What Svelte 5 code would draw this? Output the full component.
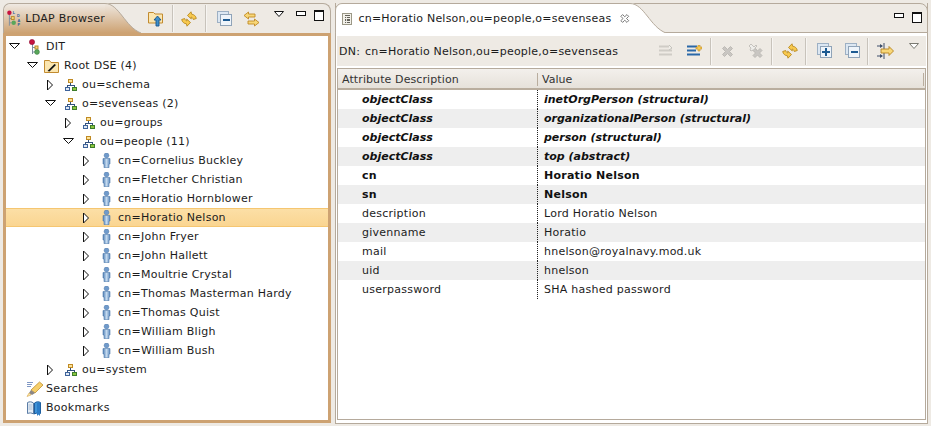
<script lang="ts">
const tree = [
	{ level: 0, open: true, icon: 'dit', label: 'DIT' },
	{ level: 1, open: true, icon: 'root', label: 'Root DSE (4)' },
	{ level: 2, open: false, icon: 'org', label: 'ou=schema' },
	{ level: 2, open: true, icon: 'org', label: 'o=sevenseas (2)' },
	{ level: 3, open: false, icon: 'org', label: 'ou=groups' },
	{ level: 3, open: true, icon: 'org', label: 'ou=people (11)' },
	{ level: 4, open: false, icon: 'person', label: 'cn=Cornelius Buckley' },
	{ level: 4, open: false, icon: 'person', label: 'cn=Fletcher Christian' },
	{ level: 4, open: false, icon: 'person', label: 'cn=Horatio Hornblower' },
	{ level: 4, open: false, icon: 'person', label: 'cn=Horatio Nelson', selected: true },
	{ level: 4, open: false, icon: 'person', label: 'cn=John Fryer' },
	{ level: 4, open: false, icon: 'person', label: 'cn=John Hallett' },
	{ level: 4, open: false, icon: 'person', label: 'cn=Moultrie Crystal' },
	{ level: 4, open: false, icon: 'person', label: 'cn=Thomas Masterman Hardy' },
	{ level: 4, open: false, icon: 'person', label: 'cn=Thomas Quist' },
	{ level: 4, open: false, icon: 'person', label: 'cn=William Bligh' },
	{ level: 4, open: false, icon: 'person', label: 'cn=William Bush' },
	{ level: 2, open: false, icon: 'org', label: 'ou=system' },
	{ level: 0, open: null, icon: 'search', label: 'Searches' },
	{ level: 0, open: null, icon: 'book', label: 'Bookmarks' }
];

const attrs = [
	{ name: 'objectClass', value: 'inetOrgPerson (structural)', kind: 'oc' },
	{ name: 'objectClass', value: 'organizationalPerson (structural)', kind: 'oc' },
	{ name: 'objectClass', value: 'person (structural)', kind: 'oc' },
	{ name: 'objectClass', value: 'top (abstract)', kind: 'oc' },
	{ name: 'cn', value: 'Horatio Nelson', kind: 'must' },
	{ name: 'sn', value: 'Nelson', kind: 'must' },
	{ name: 'description', value: 'Lord Horatio Nelson', kind: '' },
	{ name: 'givenname', value: 'Horatio', kind: '' },
	{ name: 'mail', value: 'hnelson@royalnavy.mod.uk', kind: '' },
	{ name: 'uid', value: 'hnelson', kind: '' },
	{ name: 'userpassword', value: 'SHA hashed password', kind: '' }
];
</script>

{#snippet ditIcon()}
	<svg width="16" height="16" viewBox="0 0 16 16">
		<path d="M5.500 3v12M5.500 8.500H8M5.500 13H8" stroke="#7d8ea0" fill="none" />
		<circle cx="5" cy="3" r="2.600" fill="#c8123f" stroke="#8d1037" stroke-width=".6" />
		<rect x="8" y="7" width="3" height="3" fill="#f4d67c" stroke="#b98a2a" />
		<circle cx="10" cy="13" r="2.400" fill="#5aa65a" stroke="#37803f" stroke-width=".6" />
	</svg>
{/snippet}

{#snippet orgIcon()}
	<svg class="org" width="12" height="12" viewBox="0 0 12 12" shape-rendering="crispEdges">
		<rect x="3.500" y=".5" width="4" height="3" fill="#fbe39a" stroke="#c08a24" />
		<path d="M5.500 4v2M2.500 8V6.500h6.500V8" stroke="#33527e" fill="none" />
		<rect x=".5" y="8.500" width="4" height="3" fill="#dfe8f4" stroke="#3e639a" />
		<rect x="7.500" y="8.500" width="4" height="3" fill="#8cc63f" stroke="#3d7d2c" />
	</svg>
{/snippet}

{#snippet personIcon()}
	<svg class="person" width="9" height="15" viewBox="0 0 9 15">
		<defs>
			<linearGradient id="pb" x1="0" x2="1" y1="0" y2="0">
				<stop offset="0" stop-color="#4f7fb5" />
				<stop offset=".5" stop-color="#c4daef" />
				<stop offset="1" stop-color="#5d8abd" />
			</linearGradient>
		</defs>
		<ellipse cx="4.500" cy="2.500" rx="2.400" ry="2.400" fill="#6f9acb" stroke="#4b76a8" stroke-width=".5" />
		<path d="M1 5.500h7v5.500H7v3.700H2V11H1z" fill="url(#pb)" stroke="#4f7aab" stroke-width=".6" />
	</svg>
{/snippet}

{#snippet rootIcon()}
	<svg class="root" width="15" height="14" viewBox="0 0 15 14">
		<path d="M.5 1.500h5l1.500 2h7.500v10H.5z" fill="#fbe6b0" stroke="#c28b2f" />
		<path d="M3.500 12l7-7 1.500 1-6.500 6.500z" fill="#111" />
	</svg>
{/snippet}

{#snippet searchIcon()}
	<svg class="root" width="18" height="16" viewBox="0 0 18 16">
		<path d="M1 1.500h6M1 3.500h5M1 5.500h4" stroke="#7f97c4" />
		<path d="M13.500 1 17 4l-8 8-4-3z" fill="#f6cf6b" stroke="#c08f2c" stroke-width=".8" />
		<path d="M5 9l4 3-3 2-3-2z" fill="#8b8684" />
		<path d="M3 12l2 2-4 1.500z" fill="#f6e4a8" stroke="#d49a35" stroke-width=".5" />
	</svg>
{/snippet}

{#snippet bookIcon()}
	<svg width="16" height="16" viewBox="0 0 16 16">
		<path d="M.5 2.500c2-1 4-1 6 .5v11c-2-1.300-4-1.300-6-.5z" fill="#e4edf6" stroke="#5b7da6" />
		<path d="M1.500 5h4M1.500 7h4M1.500 9h4" stroke="#a9bcd3" />
		<path d="M7.500 3c2-1.500 4-1.500 6-.5v11c-2-.8-4-.8-6 .5z" fill="#3f93d8" stroke="#1f5f9f" />
		<path d="M10 3h3v13l-1.500-1.500L10 16z" fill="#2a7cc8" />
	</svg>
{/snippet}

{#snippet twisty(open)}
	<svg class="twisty" width="12" height="12" viewBox="0 0 12 12">
		{#if open}
			<path d="M.5 2.500h10L5.500 7.500z" fill="#fff" stroke="#111" />
		{:else}
			<path d="M2.500 1v10L7.500 6z" fill="#fff" stroke="#111" />
		{/if}
	</svg>
{/snippet}

{#snippet refreshIcon()}
	<svg width="16" height="16" viewBox="0 0 16 16">
		<g fill="#f8c94e" stroke="#b98a20" stroke-width=".9">
			<path d="M6.500 4.500 10 .8l.6 2.400c2.400.2 4.200 1.800 4.700 4.300l-3 1c-.4-1.500-1.100-2.200-2.200-2.400l.2 1.800z" />
			<path d="M6.500 4.500 10 .8l.6 2.400c2.400.2 4.200 1.800 4.700 4.300l-3 1c-.4-1.500-1.100-2.200-2.200-2.400l.2 1.800z" transform="rotate(180 8 8)" />
		</g>
	</svg>
{/snippet}

{#snippet collapseIcon()}
	<svg width="16" height="16" viewBox="0 0 16 16" shape-rendering="crispEdges">
		<rect x=".5" y=".5" width="11" height="11" fill="#dce7f2" stroke="#9db0c4" />
		<rect x="3.500" y="3.500" width="11" height="11" fill="#eef4fa" stroke="#8fa3b8" />
		<path d="M5.500 9h7" stroke="#1c5a92" stroke-width="2" />
	</svg>
{/snippet}

{#snippet expandIcon()}
	<svg width="16" height="16" viewBox="0 0 16 16" shape-rendering="crispEdges">
		<rect x=".5" y=".5" width="11" height="11" fill="#dce7f2" stroke="#9db0c4" />
		<rect x="3.500" y="3.500" width="11" height="11" fill="#eef4fa" stroke="#8fa3b8" />
		<path d="M5 9h8M9 5v8" stroke="#1c5a92" stroke-width="1.500" />
	</svg>
{/snippet}

{#snippet linkIcon()}
	<svg width="17" height="16" viewBox="0 0 17 16">
		<path d="M1 4.500 5.500 1v2H12v3H5.500v2z" fill="#f8d778" stroke="#c08a24" stroke-width=".9" />
		<path d="M16 11.500 11.500 8v2H5v3h6.500v2z" fill="#f8d778" stroke="#c08a24" stroke-width=".9" />
	</svg>
{/snippet}

{#snippet upIcon()}
	<svg width="16" height="16" viewBox="0 0 16 16">
		<path d="M.5 1.500h5l1.500 1.500h7.500v9H.5z" fill="#fbe6b0" stroke="#c28b2f" />
		<path d="M9.500 5l3.500 4h-2v6H8V9H6z" fill="#3f8fc8" stroke="#17558f" stroke-width=".9" />
	</svg>
{/snippet}

{#snippet menuArrow()}
	<svg width="11" height="7" viewBox="0 0 11 7"><path d="M.5.500h9L5 5.500z" fill="#fff" stroke="#111" /></svg>
{/snippet}

{#snippet menuArrowGrey()}
	<svg width="11" height="7" viewBox="0 0 11 7"><path d="M.5.500h9L5 5.500z" fill="#fff" stroke="#7a7a72" /></svg>
{/snippet}

{#snippet winButtons()}
	<div class="win-buttons">
		<span class="btn-min"></span>
		<span class="btn-max"></span>
	</div>
{/snippet}

<div class="app">
	<section class="browser">
		<header class="tabbar">
			<div class="tab tan">
				<svg width="16" height="19" viewBox="0 0 16 19" class="tab-icon">
					<path d="M2.500 5v12M2.500 9.500H5M2.500 14H5" stroke="#7d8ea0" fill="none" />
					<circle cx="2.500" cy="3.500" r="2.300" fill="#c8123f" />
					<rect x="4.500" y="7.500" width="3" height="3" fill="#f4d67c" stroke="#b98a2a" />
					<circle cx="7" cy="14" r="2.300" fill="#5aa65a" />
					<text x="6" y="4.500" class="mini">L</text>
					<text x="10.500" y="8" class="mini">D</text>
					<text x="11" y="12.700" class="mini">A</text>
					<text x="11" y="17.400" class="mini">P</text>
				</svg>
				<span class="tab-title">LDAP Browser</span>
				<svg class="tab-curve" width="36" height="30" viewBox="0 0 36 30" preserveAspectRatio="none">
					<path d="M0 0C14 0 20 24 36 30H0z" fill="url(#tanfade)" />
					<path d="M0 .5C14 .5 20 24 36 30" fill="none" stroke="#b5aa9c" />
					<defs>
						<linearGradient id="tanfade" x1="0" x2="0" y1="0" y2="1">
							<stop offset="0" stop-color="#efe9e2" />
							<stop offset="1" stop-color="#cda272" />
						</linearGradient>
					</defs>
				</svg>
			</div>
			<div class="tools">
				<span class="tool t1">{@render upIcon()}</span>
				<i class="sep"></i>
				<span class="tool t2">{@render refreshIcon()}</span>
				<i class="sep"></i>
				<span class="tool t3">{@render collapseIcon()}</span>
				<span class="tool t4">{@render linkIcon()}</span>
				<span class="tool-menu">{@render menuArrow()}</span>
				{@render winButtons()}
			</div>
		</header>
		<div class="tree">
			{#each tree as node}
				<div class="node" class:selected={node.selected} style="padding-left: {3 + node.level * 18}px">
					<span class="twisty-box">
						{#if node.open !== null}{@render twisty(node.open)}{/if}
					</span>
					<span class="node-icon">
						{#if node.icon === 'dit'}{@render ditIcon()}
						{:else if node.icon === 'root'}{@render rootIcon()}
						{:else if node.icon === 'org'}{@render orgIcon()}
						{:else if node.icon === 'person'}{@render personIcon()}
						{:else if node.icon === 'search'}{@render searchIcon()}
						{:else}{@render bookIcon()}{/if}
					</span>
					<span>{node.label}</span>
				</div>
			{/each}
		</div>
	</section>

	<section class="editor">
		<header class="tabbar editor-bar">
			<div class="tab white">
				<svg width="12" height="14" viewBox="0 0 12 14" class="doc-icon" shape-rendering="crispEdges">
					<rect x=".5" y=".5" width="11" height="13" fill="#f3f1ea" stroke="#8d8a78" />
					<path d="M3 3h6M3 5h6M3 7h6M3 9h6M3 11h6" stroke="#4c4c44" />
					<path d="M5.500 3v9" stroke="#f3f1ea" />
				</svg>
				<span class="tab-title">cn=Horatio Nelson,ou=people,o=sevenseas</span>
				<svg class="close" width="11" height="11" viewBox="0 0 11 11">
					<path d="M1 3 3 1l2.500 2.500L8 1l2 2-2.500 2.500L10 8 8 10 5.500 7.500 3 10 1 8l2.500-2.500z" fill="#fff" stroke="#555" stroke-width=".9" />
				</svg>
				<svg class="tab-curve" width="36" height="30" viewBox="0 0 36 30" preserveAspectRatio="none">
					<path d="M0 0C14 0 20 24 36 30H0z" fill="#fff" />
					<path d="M0 .5C14 .5 20 24 36 30" fill="none" stroke="#b5aa9c" />
				</svg>
			</div>
			<div class="editor-win">{@render winButtons()}</div>
		</header>
		<div class="editor-body">
			<div class="dn-bar">
				<span class="dn">DN:</span>
				<span class="dn dn-value">cn=Horatio Nelson,ou=people,o=sevenseas</span>
				<div class="dn-tools">
					<span class="tb w28">
						<svg width="15" height="12" viewBox="0 0 15 12">
							<path d="M0 1.500h10M0 5.500h13M0 9.500h13" stroke="#cfccc6" stroke-width="2" />
							<path d="M10 0l3 3-3 2" fill="#f0eee9" stroke="#c4c2bc" />
						</svg>
					</span>
					<span class="tb w23">
						<svg width="15" height="12" viewBox="0 0 15 12">
							<path d="M0 1.500h10M0 5.500h9M0 9.500h13" stroke="#2a68a8" stroke-width="2" />
							<path d="M11 0v2H9v2h2v2h2V4h2V2h-2V0z" fill="#f8cc55" stroke="#c08a24" stroke-width=".6" />
						</svg>
					</span>
					<i class="sep"></i>
					<span class="tb w27 after-sep">
						<svg width="13" height="13" viewBox="0 0 13 13">
							<path d="M1.500 3.500l2-2 3 3 3-3 2 2-3 3 3 3-2 2-3-3-3 3-2-2 3-3z" fill="#c9c6c2" stroke="#bdbab5" />
						</svg>
					</span>
					<span class="tb w23">
						<svg width="16" height="16" viewBox="0 0 16 16">
							<path d="M1 3l2-2 3 3 2-2 1 1-2 2 2 2-2 2-2-2-2 1-1-1 1-2z" fill="#efeeeb" stroke="#c5c2bd" />
							<path d="M5 7.500l2-2 2.500 2.500 2.500-2.500 2 2-2.500 2.500 2.500 2.500-2 2-2.500-2.500-2.500 2.500-2-2 2.500-2.500z" fill="#c9c6c2" stroke="#bdbab5" />
						</svg>
					</span>
					<i class="sep"></i>
					<span class="tb w23 after-sep">{@render refreshIcon()}</span>
					<i class="sep"></i>
					<span class="tb w28 after-sep wide">{@render expandIcon()}</span>
					<span class="tb w22">{@render collapseIcon()}</span>
					<i class="sep"></i>
					<span class="tb w32 narrow">
						<svg width="17" height="16" viewBox="0 0 17 16">
							<path d="M0 3h5M0 13h5" stroke="#3e4f6a" />
							<path d="M3 1l3 2-3 2zM3 11l3 2-3 2z" fill="#3e4f6a" />
							<path d="M7 0v16" stroke="#3e4f6a" />
							<path d="M4 6h8V3.500L16.500 8 12 12.500V10H4z" fill="#f8d778" stroke="#b5851f" stroke-width=".9" />
						</svg>
					</span>
					<span class="menu-r">{@render menuArrowGrey()}</span>
				</div>
			</div>
			<div class="table">
				<div class="thead">
					<span class="th-a">Attribute Description</span>
					<span class="th-v">Value</span>
				</div>
				{#each attrs as row, i}
					<div class="row {row.kind}" class:alt={i % 2 === 1}>
						<span class="cell-a">{row.name}</span>
						<span class="cell-v">{row.value}</span>
					</div>
				{/each}
			</div>
		</div>
	</section>
</div>

<style>
	:global(body) {
		margin: 0;
		background: #eeeae4;
	}

	.app {
		display: flex;
		gap: 4px;
		height: 426px;
		box-sizing: border-box;
		padding: 3px 3px 2px 3px;
		font-family: 'DejaVu Sans', sans-serif;
		font-size: 11px;
		color: #1c1c1c;
	}

	.browser {
		width: 328px;
		display: flex;
		flex-direction: column;
	}

	.editor {
		flex: 1;
		display: flex;
		flex-direction: column;
		box-sizing: border-box;
		border: 1px solid #b5aa9c;
		border-top: none;
	}

	.tabbar {
		height: 30px;
		display: flex;
		flex-shrink: 0;
		background: #eeeae4;
		border-top: 1px solid #b5aa9c;
		border-right: 1px solid #b5aa9c;
		border-top-right-radius: 8px;
		box-sizing: border-box;
		position: relative;
	}

	.browser .tabbar {
		border-left: 1px solid #b5aa9c;
		border-top-left-radius: 7px;
	}

	.editor-bar {
		margin: 0 -1px;
		border-left: 1px solid #b5aa9c;
		border-top-left-radius: 7px;
		border-bottom: 1px solid #b5aa9c;
	}

	.tab {
		display: flex;
		align-items: center;
		position: relative;
		height: 100%;
	}

	.tab.tan {
		width: 101px;
		background: linear-gradient(#efe9e2, #cda272);
		border-top-left-radius: 7px;
	}

	.tab.white {
		width: 294px;
		background: #fff;
		border-top-left-radius: 7px;
		margin-bottom: -1px;
		height: 30px;
	}

	.tab-icon {
		margin-left: 3px;
		margin-top: -1px;
	}

	.tab-title {
		margin-left: 3px;
		white-space: nowrap;
		letter-spacing: 0.25px;
	}

	.doc-icon {
		margin-left: 6px;
		margin-right: 2px;
		margin-top: -1px;
	}

	.tab.white .tab-title {
		margin-top: -1px;
		margin-left: 4px;
		letter-spacing: 0.22px;
	}

	.close {
		margin-left: 9px;
		margin-top: -1px;
	}

	.tab-curve {
		position: absolute;
		left: 100%;
		top: -1px;
	}

	.mini {
		font-family: 'Liberation Sans', sans-serif;
		font-size: 4px;
		font-weight: bold;
		fill: #2a5a9a;
	}

	.tools {
		flex: 1;
		display: flex;
		align-items: center;
		padding-left: 43px;
		margin-top: -1px;
	}

	.tool {
		display: flex;
		margin-top: 2px;
	}

	.t1 { margin-right: 8px; }
	.t2 { margin: 2px 8px 0 8px; }
	.t3 { margin: 2px 10px 0 11px; }
	.t4 { margin-right: 14px; }

	.sep {
		display: block;
		flex-shrink: 0;
		width: 1px;
		height: 27px;
		background: #c8c3bb;
		box-shadow: 1px 0 0 #f7f5f2;
	}

	.tool-menu {
		display: flex;
		margin-top: -8px;
	}

	.win-buttons {
		display: flex;
		align-items: flex-start;
		gap: 8px;
		margin-left: 11px;
		margin-top: -5px;
	}

	.btn-min {
		width: 8px;
		height: 3px;
		border: 1px solid #111;
		background: #fff;
		margin-top: 1px;
	}

	.btn-max {
		width: 8px;
		height: 8px;
		border: 1px solid #111;
		border-top-width: 2px;
		background: #fff;
	}

	.editor-win {
		margin-left: auto;
		margin-right: 5px;
		margin-top: 8px;
	}

	.editor-win .win-buttons {
		margin-top: 0;
	}

	.tree {
		flex: 1;
		box-sizing: border-box;
		border: 3px solid #cda272;
		background: #fff;
		padding-top: 1px;
		margin-bottom: 1px;
	}

	.node {
		display: flex;
		align-items: center;
		height: 19px;
		box-sizing: border-box;
		white-space: nowrap;
		letter-spacing: 0.25px;
	}

	.node.selected {
		background: linear-gradient(#fcdfa6, #fad591);
		border-top: 1px solid #f5c671;
		border-bottom: 1px solid #f5c671;
	}

	.twisty-box {
		width: 18px;
		height: 12px;
		flex-shrink: 0;
		display: flex;
	}

	.node-icon {
		width: 19px;
		flex-shrink: 0;
		display: flex;
		align-items: center;
		height: 16px;
	}

	.org {
		margin-left: 2px;
	}

	.person {
		margin-left: 3px;
	}

	.root {
		margin-left: -1px;
		flex-shrink: 0;
	}

	.editor-body {
		flex: 1;
		display: flex;
		flex-direction: column;
		background: #fff;
		padding: 3px 1px 3px 1px;
		min-height: 0;
	}

	.dn-bar {
		height: 30px;
		display: flex;
		align-items: center;
		background: #eeeae4;
		flex-shrink: 0;
		margin-bottom: 2px;
	}

	.dn {
		padding-left: 2px;
		white-space: nowrap;
		letter-spacing: 0.22px;
	}

	.dn-value {
		padding-left: 5px;
	}

	.dn-tools {
		margin-left: auto;
		display: flex;
		align-items: center;
		height: 100%;
		padding-right: 6px;
	}

	.tb {
		display: flex;
		flex-shrink: 0;
	}

	.w22 { width: 22px; }
	.w23 { width: 23px; }
	.w27 { width: 27px; }
	.w28 { width: 28px; }
	.w32 { width: 32px; }

	.after-sep { margin-left: 10px; }
	.after-sep.wide { margin-left: 11px; }
	.narrow { margin-left: 9px; }

	.menu-r {
		display: flex;
		margin-top: -9px;
	}

	.table {
		flex: 1;
		border: 1px solid #b5aa9c;
		background: #fff;
		min-height: 0;
	}

	.thead {
		height: 18px;
		padding-top: 1px;
		display: flex;
		align-items: center;
		background: linear-gradient(#f3f0ec, #e6e1da);
		border-bottom: 2px solid #b9ad9e;
		color: #333;
	}

	.th-a {
		width: 200px;
		padding-left: 4px;
		box-sizing: border-box;
		border-right: 1px solid #b9ad9e;
		letter-spacing: 0.1px;
	}

	.th-v {
		flex: 1;
		margin-right: 1px;
		padding-left: 4px;
		border-right: 1px solid #b9ad9e;
	}

	.row {
		display: flex;
		height: 19px;
		align-items: center;
		white-space: nowrap;
		letter-spacing: 0.25px;
	}

	.row.alt {
		background: #eeeeee;
	}

	.row.oc {
		font-weight: bold;
		font-style: italic;
		color: #111;
		letter-spacing: 0;
	}

	.row.must {
		font-weight: bold;
		color: #111;
	}

	.cell-a {
		width: 200px;
		box-sizing: border-box;
		padding-left: 24px;
		height: 100%;
		line-height: 19px;
		border-right: 1px dotted #222;
	}

	.cell-v {
		padding-left: 6px;
	}
</style>
